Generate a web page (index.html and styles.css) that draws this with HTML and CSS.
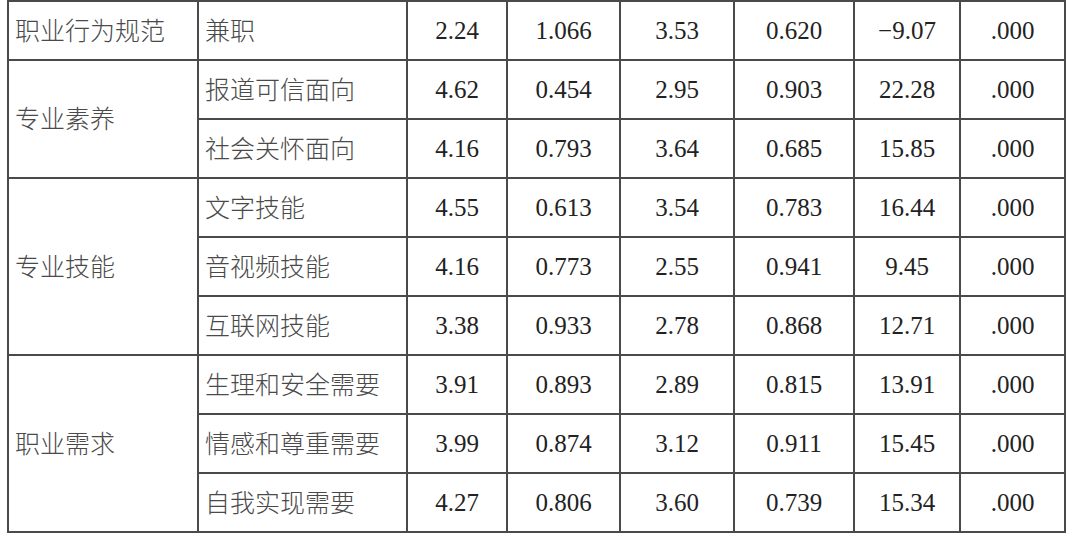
FILE: index.html
```html
<!DOCTYPE html>
<html lang="zh-CN">
<head>
<meta charset="utf-8">
<title>表</title>
<link rel="stylesheet" href="styles.css">
</head>
<body>
<div class="wrap">
<table class="data">
  <colgroup>
    <col class="c1"><col class="c2"><col class="c3"><col class="c4"><col class="c5"><col class="c6"><col class="c7"><col class="c8">
  </colgroup>
  <tbody>
    <tr><td class="lbl">职业行为规范</td><td class="lbl">兼职</td><td class="num">2.24</td><td class="num">1.066</td><td class="num">3.53</td><td class="num">0.620</td><td class="num">−9.07</td><td class="num">.000</td></tr>
    <tr><td class="lbl" rowspan="2">专业素养</td><td class="lbl">报道可信面向</td><td class="num">4.62</td><td class="num">0.454</td><td class="num">2.95</td><td class="num">0.903</td><td class="num">22.28</td><td class="num">.000</td></tr>
    <tr><td class="lbl">社会关怀面向</td><td class="num">4.16</td><td class="num">0.793</td><td class="num">3.64</td><td class="num">0.685</td><td class="num">15.85</td><td class="num">.000</td></tr>
    <tr><td class="lbl" rowspan="3">专业技能</td><td class="lbl">文字技能</td><td class="num">4.55</td><td class="num">0.613</td><td class="num">3.54</td><td class="num">0.783</td><td class="num">16.44</td><td class="num">.000</td></tr>
    <tr><td class="lbl">音视频技能</td><td class="num">4.16</td><td class="num">0.773</td><td class="num">2.55</td><td class="num">0.941</td><td class="num">9.45</td><td class="num">.000</td></tr>
    <tr><td class="lbl">互联网技能</td><td class="num">3.38</td><td class="num">0.933</td><td class="num">2.78</td><td class="num">0.868</td><td class="num">12.71</td><td class="num">.000</td></tr>
    <tr><td class="lbl" rowspan="3">职业需求</td><td class="lbl">生理和安全需要</td><td class="num">3.91</td><td class="num">0.893</td><td class="num">2.89</td><td class="num">0.815</td><td class="num">13.91</td><td class="num">.000</td></tr>
    <tr><td class="lbl">情感和尊重需要</td><td class="num">3.99</td><td class="num">0.874</td><td class="num">3.12</td><td class="num">0.911</td><td class="num">15.45</td><td class="num">.000</td></tr>
    <tr><td class="lbl">自我实现需要</td><td class="num">4.27</td><td class="num">0.806</td><td class="num">3.60</td><td class="num">0.739</td><td class="num">15.34</td><td class="num">.000</td></tr>
  </tbody>
</table>
</div>
</body>
</html>
```
FILE: styles.css
```css
html, body {
  margin: 0;
  padding: 0;
  background: #ffffff;
}
.wrap {
  padding: 0 10px 0 7px;
}
.data {
  border-collapse: collapse;
  width: 1057px;
  table-layout: fixed;
}
.c1 { width: 190px; }
.c2 { width: 209px; }
.c3 { width: 100px; }
.c4 { width: 113px; }
.c5 { width: 114px; }
.c6 { width: 120px; }
.c7 { width: 106px; }
.c8 { width: 105px; }
.data td {
  border: 2px solid #4a4a4a;
  vertical-align: middle;
}
.data td.lbl {
  font-family: "Noto Sans CJK SC", "Noto Sans", sans-serif;
  font-weight: 300;
  font-size: 25px;
  line-height: 30px;
  color: #4a4a4a;
  height: 53px;
  padding: 0 0 4px 6px;
  text-align: left;
  white-space: nowrap;
}
.data td.num {
  font-family: "Liberation Serif", "Times New Roman", "DejaVu Serif", serif;
  font-size: 25px;
  line-height: 30px;
  color: #222222;
  height: 57px;
  padding: 0;
  text-align: center;
}
```
